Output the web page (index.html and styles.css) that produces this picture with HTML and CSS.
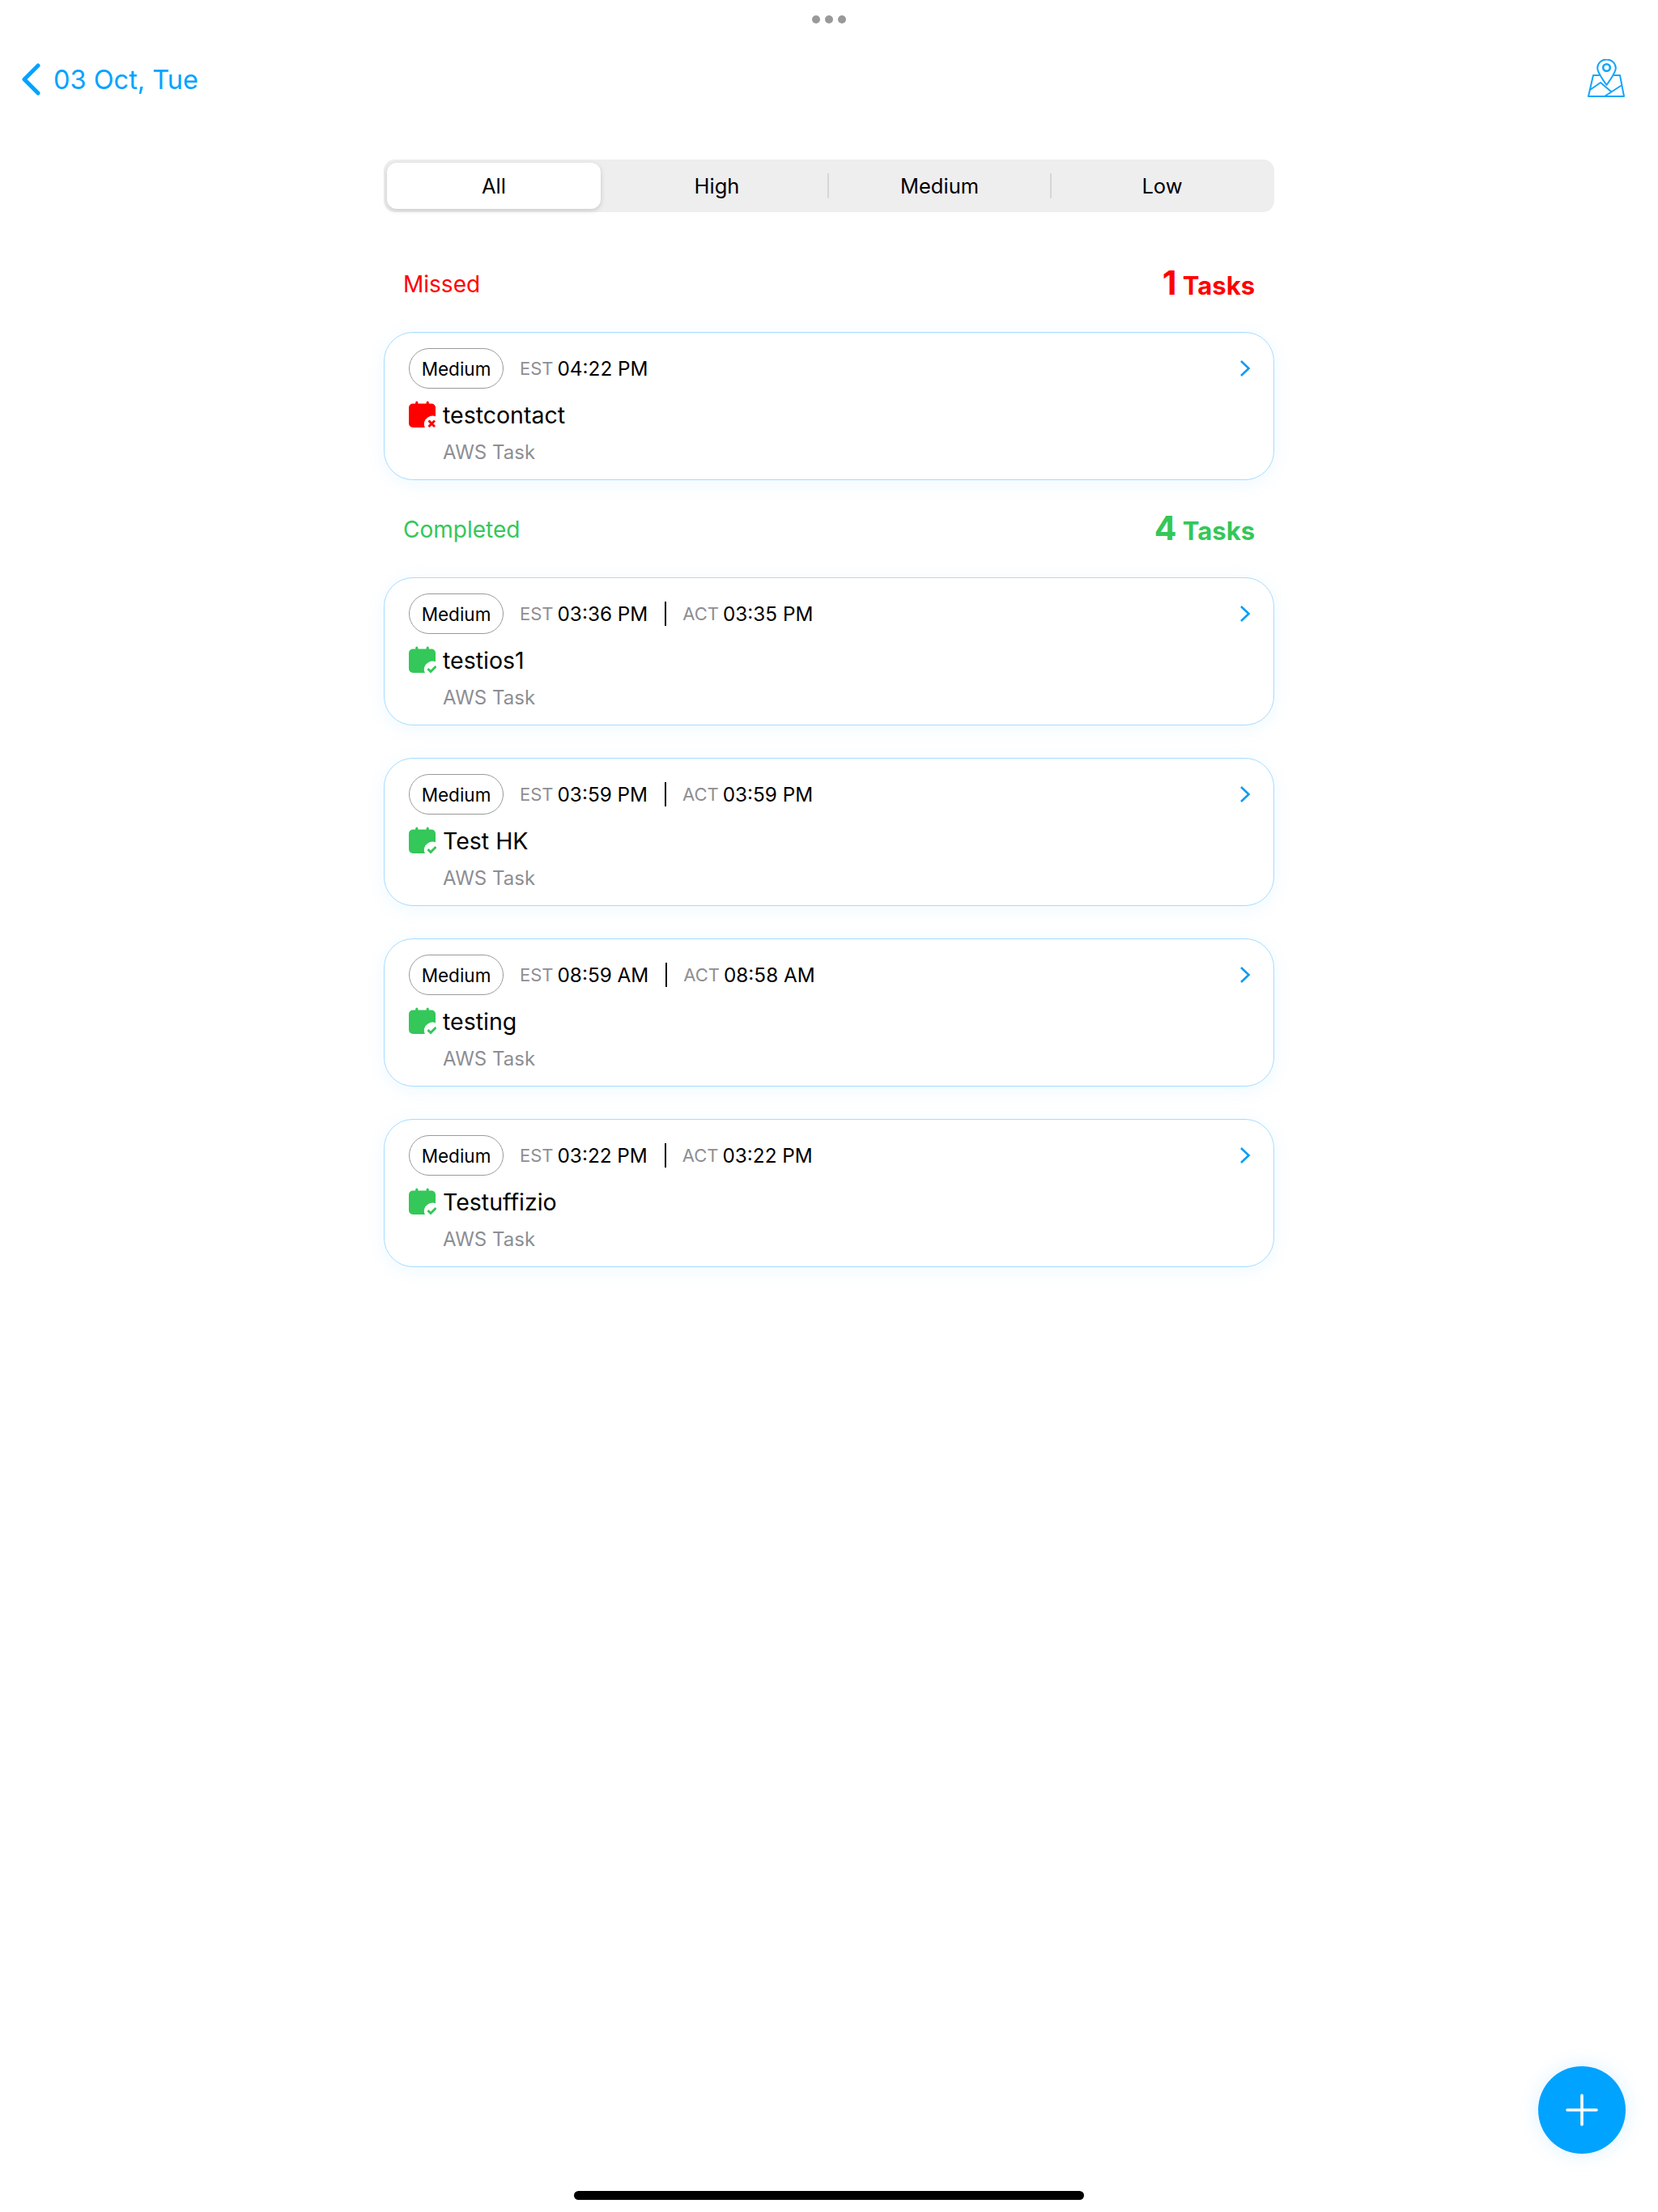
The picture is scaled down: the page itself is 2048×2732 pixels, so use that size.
FILE: index.html
```html
<!DOCTYPE html>
<html lang="en">
<head>
<meta charset="utf-8">
<title>03 Oct, Tue</title>
<link rel="stylesheet" href="styles.css">
</head>
<body>
<svg class="defs" width="0" height="0" aria-hidden="true">
  <defs>
    <path id="cal-body" d="M5 3.500h3.200V2.200a1.600 1.600 0 0 1 3.200 0v1.300h10.200V2.200a1.600 1.600 0 0 1 3.200 0v1.300H28a5 5 0 0 1 5 5v10.700a9.500 9.500 0 0 0-9.500 1.300 9.500 9.500 0 0 0-3.600 12.500H5a5 5 0 0 1-5-5V8.500a5 5 0 0 1 5-5z"/>
    <symbol id="chev" viewBox="0 0 14 22"><path d="M2 2l9.500 9-9.500 9" fill="none" stroke="#0a9cf5" stroke-width="2.600"/></symbol>
  </defs>
</svg>
<div class="page">
  <div class="dots"><i></i><i></i><i></i></div>
  <header class="topbar">
    <div class="back">
      <svg class="back-icon" viewBox="0 0 24 40"><path d="M21 3L4 20l17 17" fill="none" stroke="#00a3ff" stroke-width="5" stroke-linecap="round" stroke-linejoin="round"/></svg>
      <span>03 Oct, Tue</span>
    </div>
    <svg class="map-icon" viewBox="0 1 46 50" fill="none" stroke="#12a5fb" stroke-width="2" stroke-linejoin="round" stroke-linecap="round">
      <path d="M23.500 1.500c6.400 0 11.300 4.800 11.300 10.500 0 5-5.800 13.400-11.300 21-5.500-7.600-11.300-16-11.300-21 0-5.700 4.900-10.500 11.300-10.500z"/>
      <circle cx="23.500" cy="11.500" r="4.300" stroke-width="2.600"/>
      <path d="M14 21H7L1 47h44l-5-26h-7"/>
      <path d="M3 39l13-9 13 11M21 47l20-13"/>
    </svg>
  </header>
  <main class="content">
    <nav class="segments">
      <div class="seg seg-on">All</div>
      <div class="seg">High</div>
      <div class="seg seg-div">Medium</div>
      <div class="seg seg-div">Low</div>
    </nav>

    <section class="section missed">
      <div class="sec-head"><span class="sec-name">Missed</span><span class="sec-count"><b>1</b> Tasks</span></div>
      <article class="card">
        <div class="row-top"><span class="pill">Medium</span><span class="lbl">EST</span><span class="time">04:22 PM</span></div>
        <div class="row-title">
          <svg class="cal" viewBox="0 0 34 35"><use href="#cal-body"/><path d="M24.500 24.500l7.500 7.500m0-7.500l-7.500 7.500" fill="none" stroke="currentColor" stroke-width="3"/></svg>
          <span>testcontact</span>
        </div>
        <div class="sub">AWS Task</div>
        <svg class="chev"><use href="#chev"/></svg>
      </article>
    </section>

    <section class="section done">
      <div class="sec-head"><span class="sec-name">Completed</span><span class="sec-count"><b>4</b> Tasks</span></div>
      <article class="card">
        <div class="row-top"><span class="pill">Medium</span><span class="lbl">EST</span><span class="time">03:36 PM</span><i class="sep"></i><span class="lbl">ACT</span><span class="time">03:35 PM</span></div>
        <div class="row-title">
          <svg class="cal" viewBox="0 0 34 35"><use href="#cal-body"/><path d="M23.500 28l3.500 3.500 6.500-6.500" fill="none" stroke="currentColor" stroke-width="3"/></svg>
          <span>testios1</span>
        </div>
        <div class="sub">AWS Task</div>
        <svg class="chev"><use href="#chev"/></svg>
      </article>
      <article class="card">
        <div class="row-top"><span class="pill">Medium</span><span class="lbl">EST</span><span class="time">03:59 PM</span><i class="sep"></i><span class="lbl">ACT</span><span class="time">03:59 PM</span></div>
        <div class="row-title">
          <svg class="cal" viewBox="0 0 34 35"><use href="#cal-body"/><path d="M23.500 28l3.500 3.500 6.500-6.500" fill="none" stroke="currentColor" stroke-width="3"/></svg>
          <span>Test HK</span>
        </div>
        <div class="sub">AWS Task</div>
        <svg class="chev"><use href="#chev"/></svg>
      </article>
      <article class="card">
        <div class="row-top"><span class="pill">Medium</span><span class="lbl">EST</span><span class="time">08:59 AM</span><i class="sep"></i><span class="lbl">ACT</span><span class="time">08:58 AM</span></div>
        <div class="row-title">
          <svg class="cal" viewBox="0 0 34 35"><use href="#cal-body"/><path d="M23.500 28l3.500 3.500 6.500-6.500" fill="none" stroke="currentColor" stroke-width="3"/></svg>
          <span>testing</span>
        </div>
        <div class="sub">AWS Task</div>
        <svg class="chev"><use href="#chev"/></svg>
      </article>
      <article class="card">
        <div class="row-top"><span class="pill">Medium</span><span class="lbl">EST</span><span class="time">03:22 PM</span><i class="sep"></i><span class="lbl">ACT</span><span class="time">03:22 PM</span></div>
        <div class="row-title">
          <svg class="cal" viewBox="0 0 34 35"><use href="#cal-body"/><path d="M23.500 28l3.500 3.500 6.500-6.500" fill="none" stroke="currentColor" stroke-width="3"/></svg>
          <span>Testuffizio</span>
        </div>
        <div class="sub">AWS Task</div>
        <svg class="chev"><use href="#chev"/></svg>
      </article>
    </section>
  </main>
  <button class="fab" aria-label="Add"><svg viewBox="0 0 40 40"><path d="M20 2v36M2 20h36" stroke="#fff" stroke-width="3.600" stroke-linecap="round"/></svg></button>
  <div class="home-bar"></div>
</div>
</body>
</html>
```

FILE: styles.css
```css
* { box-sizing: border-box; }
html, body { margin: 0; padding: 0; background: #fff; }
body { font-family: Inter, "Liberation Sans", sans-serif; color: #000; }
.defs { position: absolute; }
.page { position: relative; width: 2048px; height: 2732px; display: flex; flex-direction: column; overflow: hidden; background: #fff; }

.dots { display: flex; justify-content: center; gap: 6px; padding-top: 19px; height: 29px; }
.dots i { width: 10px; height: 10px; border-radius: 50%; background: #999; }

.topbar { display: flex; justify-content: space-between; align-items: center; height: 80px; padding: 10px 41px 0 26px; margin-top: 24px; }
.back { display: flex; align-items: center; gap: 16px; color: #00a3ff; font-size: 32.500px; }
.back-icon { width: 24px; height: 40px; }
.map-icon { width: 46px; height: 50px; }

.content { width: 1100px; margin: 0 auto; padding-top: 64px; }
.segments { display: grid; grid-template-columns: repeat(4, 1fr); height: 65px; background: #eeeeee; border-radius: 14px; padding: 4px 0; }
.seg { display: flex; align-items: center; justify-content: center; font-size: 25.500px; position: relative; padding-right: 2px; }
.seg-on { background: #fff; border-radius: 12px; box-shadow: 0 2px 6px rgba(0,0,0,.16); margin: 0 7px 0 4px; padding-right: 0; }
.seg-div::before { content: ""; position: absolute; left: -2px; top: 13px; bottom: 13px; width: 2px; background: #d6d6d6; }

.section { display: flex; flex-direction: column; gap: 40px; }
.missed { padding-top: 59px; color: #ff0000; }
.done { padding-top: 31px; color: #34c759; }
.sec-head { display: flex; justify-content: space-between; align-items: center; height: 60px; padding: 0 24px; margin-bottom: -11px; }
.sec-name { font-size: 28px; }
.sec-count { font-size: 31px; font-weight: 700; padding-bottom: 4px; }
.sec-count b { font-size: 41px; font-weight: 700; }

.card { position: relative; height: 183px; color: #000; border: 1.500px solid #a6dcff; border-radius: 36px; background: #fff; box-shadow: 0 4px 24px rgba(0,163,255,.07); padding: 18px 30px 0; }
.row-top { display: flex; align-items: center; height: 52px; }
.pill { display: flex; align-items: center; justify-content: center; width: 117px; height: 50px; border: 1.500px solid #9a9a9a; border-radius: 25px; font-size: 22.500px; margin-right: 20px; }
.lbl { color: #8e8e93; font-size: 22px; margin-right: 5px; }
.time { font-size: 24.300px; }
.sep { width: 2px; height: 30px; background: #000; margin: 0 20px 0 21px; }
.row-title { display: flex; align-items: center; gap: 8px; height: 36px; margin-top: 13px; font-size: 28.500px; }
.missed .cal { color: #ff0000; }
.done .cal { color: #34c759; }
.cal { width: 34px; height: 35px; fill: currentColor; flex: none; }
.sub { color: #8e8e93; font-size: 24px; margin-top: 14px; padding-left: 42px; }
.chev { position: absolute; right: 28px; top: 33px; width: 14px; height: 22px; }

.fab { position: absolute; left: 1900px; top: 2552px; width: 108px; height: 108px; border: 0; border-radius: 50%; background: #00a3ff; box-shadow: 0 0 24px rgba(0,163,255,.15); padding: 34px; }
.fab svg { display: block; width: 40px; height: 40px; }
.home-bar { position: absolute; left: 709px; top: 2706px; width: 630px; height: 11px; border-radius: 6px; background: #000; }
```
